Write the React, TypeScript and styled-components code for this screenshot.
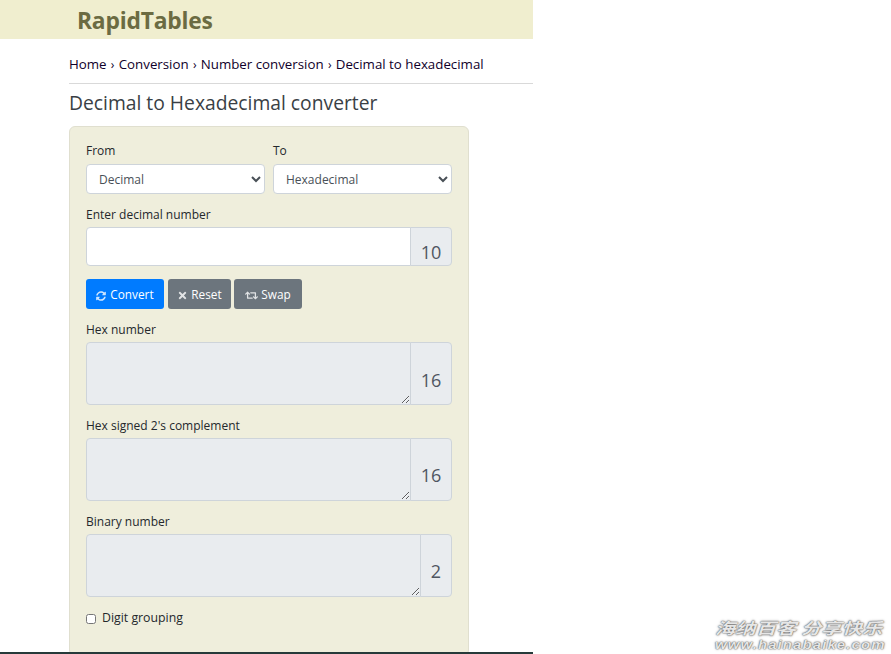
import React from "react";
import styled, { createGlobalStyle } from "styled-components";
import { FaSyncAlt, FaTimes, FaRetweet } from "react-icons/fa";

const GlobalStyle = createGlobalStyle`
  html, body {
    margin: 0;
    padding: 0;
    height: 654px;
    overflow: hidden;
    background: #fff;
    font-family: "Open Sans", "Liberation Sans", sans-serif;
  }
  * { box-sizing: border-box; }
`;

const Page = styled.div`
  position: relative;
  width: 533px;
`;

const Header = styled.header`
  height: 39px;
  background: #f0eecf;
  padding: 1px 0 0 77px;
  display: flex;
  align-items: center;
  color: #6b6b42;
  font-size: 22.8px;
  font-weight: 700;
  letter-spacing: -0.2px;
`;

const Main = styled.main`
  padding-left: 69px;
`;

const Breadcrumb = styled.div`
  height: 45px;
  padding-top: 16px;
  border-bottom: 1px solid #d9d9d9;
  font-size: 13.3px;
  line-height: 18px;
  color: #10002a;
  white-space: nowrap;
`;

const Sep = styled.span`
  padding: 0 0.8px;
  font-size: 12px;
`;

const Title = styled.h1`
  margin: 0;
  height: 42px;
  padding-top: 6px;
  font-size: 19.3px;
  line-height: 26px;
  font-weight: 400;
  color: #3a3f45;
`;

const Card = styled.form`
  width: 400px;
  height: 530px;
  padding: 15px 16px 16px;
  background: #efeedc;
  border: 1px solid #e0dfcf;
  border-radius: 6px;
`;

const Row = styled.div`
  display: flex;
  gap: 8px;
`;

const Column = styled.div`
  flex: 1;
`;

const Label = styled.label<{ $top?: number; $bottom?: number }>`
  display: block;
  margin-top: ${(p) => p.$top ?? 0}px;
  margin-bottom: ${(p) => p.$bottom ?? 4}px;
  font-size: 12px;
  line-height: 17px;
  color: #24282c;
`;

const Select = styled.select`
  display: block;
  width: 100%;
  height: 30px;
  padding: 0 8px;
  background: #fff;
  border: 1px solid #ced4da;
  border-radius: 4px;
  font-family: inherit;
  font-size: 12px;
  color: #495057;
`;

const Group = styled.div`
  display: flex;
`;

const TextInput = styled.input`
  flex: 1;
  min-width: 0;
  height: 39px;
  background: #fff;
  border: 1px solid #ced4da;
  border-radius: 4px 0 0 4px;
`;

const Area = styled.textarea`
  flex: 1;
  min-width: 0;
  height: 63px;
  display: block;
  margin: 0;
  background: #e9ecef;
  border: 1px solid #ced4da;
  border-radius: 4px 0 0 4px;
  resize: both;
`;

const Base = styled.span<{ $width?: number; $bottom?: number }>`
  display: flex;
  align-items: flex-end;
  justify-content: center;
  width: ${(p) => p.$width ?? 42}px;
  margin-left: -1px;
  padding-bottom: ${(p) => p.$bottom ?? 14}px;
  background: #e9ecef;
  border: 1px solid #ced4da;
  border-radius: 0 4px 4px 0;
  font-size: 18px;
  line-height: 20px;
  color: #4f5661;
`;

const Buttons = styled.div`
  display: flex;
  margin: 13px 0 12px;
`;

const Button = styled.button<{ $primary?: boolean; $width: number; $gap: number; $icon: number; $after: number }>`
  display: flex;
  align-items: center;
  justify-content: center;
  gap: ${(p) => p.$gap}px;
  width: ${(p) => p.$width}px;
  height: 30px;
  margin-right: ${(p) => p.$after}px;
  padding: 0;
  border: 0;
  border-radius: 3px;
  background: ${(p) => (p.$primary ? "#007bff" : "#6c757d")};
  color: #fff;
  font-family: inherit;
  font-size: 11.8px;
  svg {
    margin-top: 3px;
    opacity: 0.8;
    font-size: ${(p) => p.$icon}px;
  }
`;

const CheckRow = styled.label`
  display: flex;
  align-items: center;
  gap: 6px;
  margin-top: 12px;
  font-size: 12.3px;
  line-height: 17px;
  color: #24282c;
  input {
    margin: 2px 0 0;
    width: 10px;
    height: 10px;
  }
`;

const Footer = styled.footer`
  position: relative;
  height: 4px;
  margin-top: -4px;
  background: #263a3a;
`;

const Watermark = styled.div`
  position: absolute;
  left: 715px;
  top: 617px;
  color: #e6e6e6;
  font-style: italic;
  font-weight: 700;
  text-shadow: 0 0 2px #555, 0 0 1px #555;
  white-space: nowrap;
`;

const WatermarkCn = styled.div`
  font-family: "Noto Sans CJK SC", sans-serif;
  font-size: 15.6px;
  line-height: 20px;
  transform: scaleX(1.305);
  transform-origin: left top;
`;

const WatermarkUrl = styled.div`
  margin-top: 2px;
  font-family: "Liberation Sans", sans-serif;
  font-size: 12.5px;
  line-height: 12px;
  letter-spacing: 0.9px;
  transform: scaleX(1.2);
  transform-origin: left top;
`;

function Result({
  label,
  base,
  width,
  top,
  bottom,
}: {
  label: string;
  base: string;
  width?: number;
  top: number;
  bottom?: number;
}) {
  return (
    <>
      <Label $top={top}>{label}</Label>
      <Group>
        <Area readOnly />
        <Base $width={width} $bottom={bottom}>
          {base}
        </Base>
      </Group>
    </>
  );
}

export default function App() {
  return (
    <>
      <GlobalStyle />
      <Page>
        <Header>RapidTables</Header>
        <Main>
          <Breadcrumb>
            Home <Sep>›</Sep> Conversion <Sep>›</Sep> Number conversion <Sep>›</Sep> Decimal to hexadecimal
          </Breadcrumb>
          <Title>Decimal to Hexadecimal converter</Title>
          <Card>
            <Row>
              <Column>
                <Label $bottom={5}>From</Label>
                <Select defaultValue="Decimal">
                  <option>Decimal</option>
                  <option>Hexadecimal</option>
                </Select>
              </Column>
              <Column>
                <Label $bottom={5}>To</Label>
                <Select defaultValue="Hexadecimal">
                  <option>Decimal</option>
                  <option>Hexadecimal</option>
                </Select>
              </Column>
            </Row>
            <Label $top={12}>Enter decimal number</Label>
            <Group>
              <TextInput />
              <Base $bottom={3}>10</Base>
            </Group>
            <Buttons>
              <Button type="button" $primary $width={78} $gap={4} $icon={10} $after={4}>
                <FaSyncAlt />
                Convert
              </Button>
              <Button type="button" $width={63} $gap={3} $icon={11} $after={3}>
                <FaTimes />
                Reset
              </Button>
              <Button type="button" $width={68} $gap={3} $icon={13} $after={0}>
                <FaRetweet />
                Swap
              </Button>
            </Buttons>
            <Result label="Hex number" base="16" top={0} />
            <Result label="Hex signed 2's complement" base="16" top={12} bottom={15} />
            <Result label="Binary number" base="2" width={32} top={12} bottom={15} />
            <CheckRow>
              <input type="checkbox" />
              Digit grouping
            </CheckRow>
          </Card>
        </Main>
        <Footer />
        <Watermark>
          <WatermarkCn>海纳百客 分享快乐</WatermarkCn>
          <WatermarkUrl>www.hainabaike.com</WatermarkUrl>
        </Watermark>
      </Page>
    </>
  );
}
